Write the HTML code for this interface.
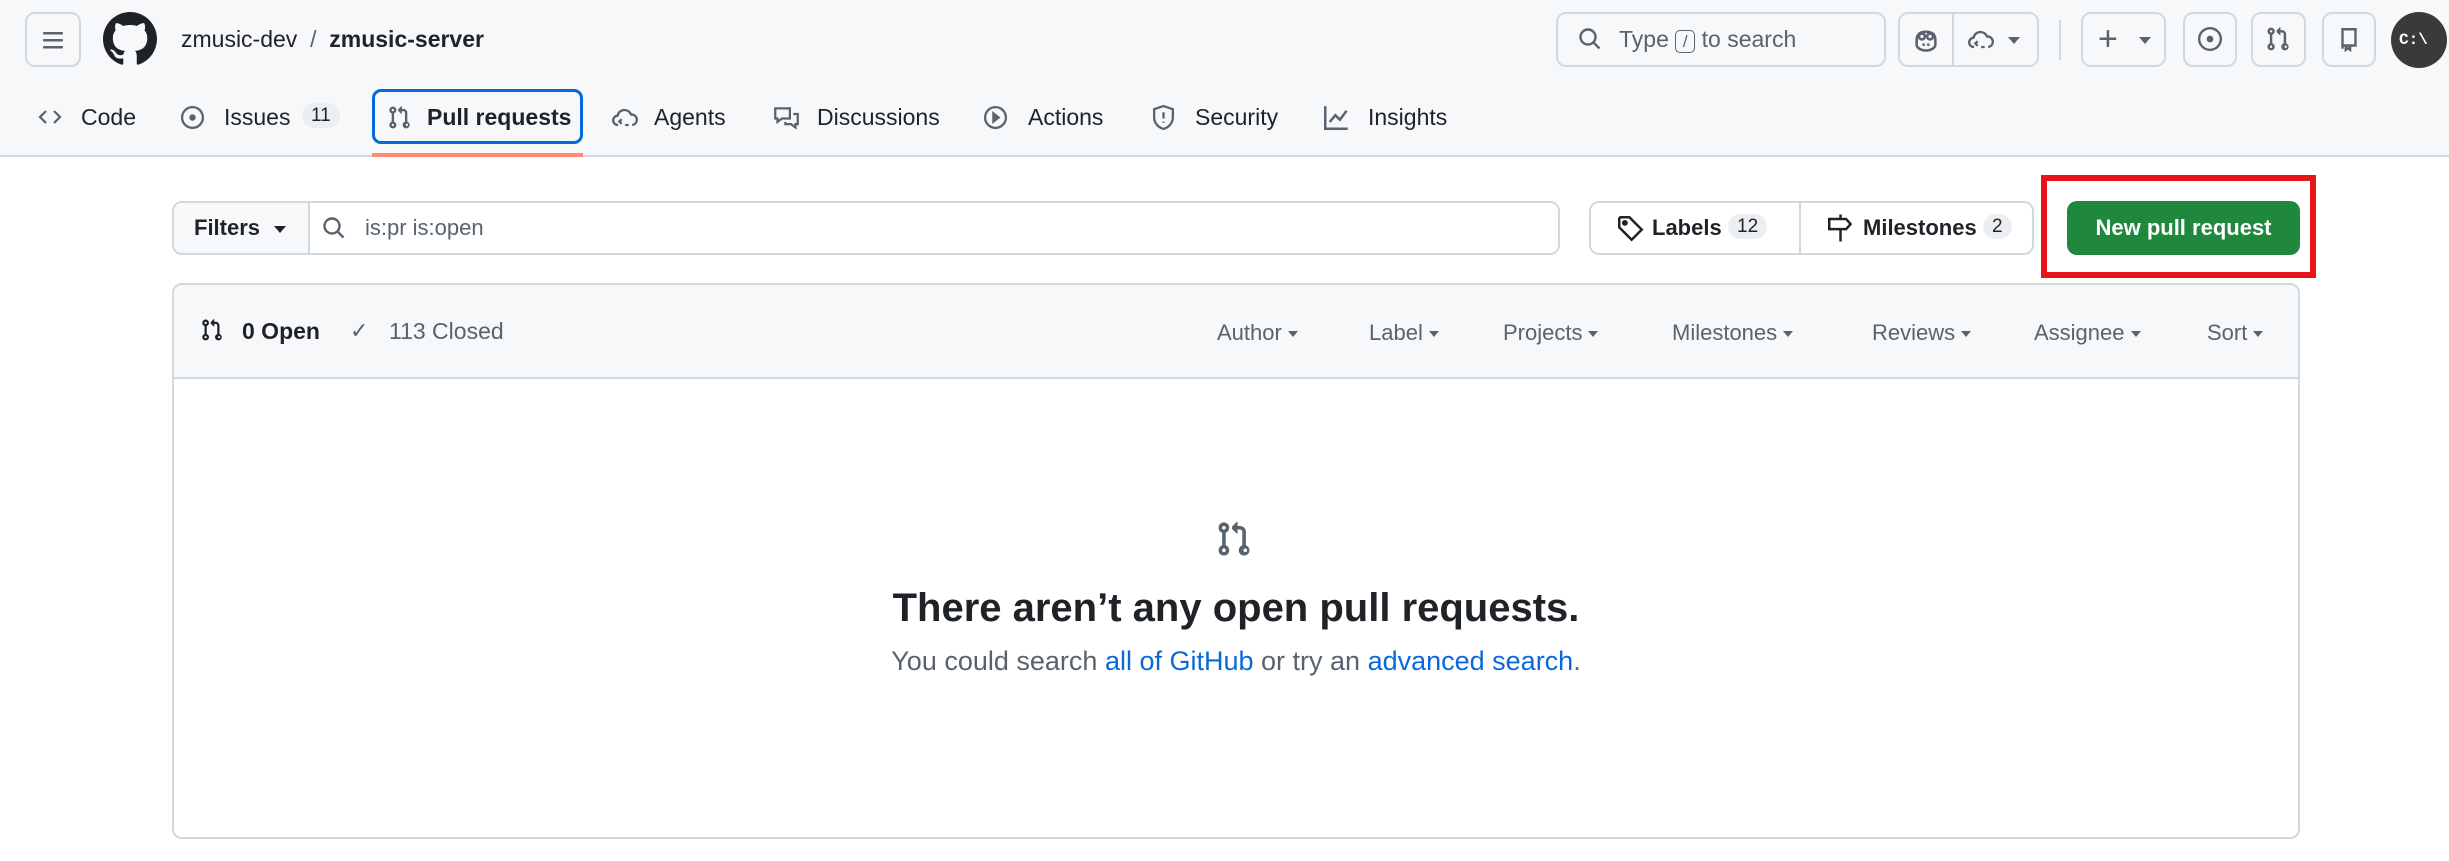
<!DOCTYPE html>
<html><head><meta charset="utf-8"><style>
*{box-sizing:border-box;margin:0;padding:0}
body{width:2449px;height:861px;background:#fff;font-family:"Liberation Sans",sans-serif;color:#1f2328;position:relative;overflow:hidden}
.hdr{position:absolute;left:0;top:0;width:2449px;height:157px;background:#f6f8fa;border-bottom:2px solid #d1d9e0}
.a{position:absolute}
.btn{position:absolute;border:2px solid #d1d9e0;border-radius:10px;background:#f6f8fa}
.t{position:absolute;white-space:nowrap;font-size:22px;line-height:1}
svg{position:absolute}
.cnt{background:#eceff2;border-radius:20px;padding:3px 9px;font-size:19px;color:#1f2328}
.dd{color:#59636e;font-size:22px;position:absolute;top:320px}
.dd:after{content:"";display:inline-block;margin-left:6px;vertical-align:3px;border-left:5px solid transparent;border-right:5px solid transparent;border-top:6px solid #59636e}
</style></head><body>
<div class="hdr"></div>
<div class="btn" style="left:25px;top:12px;width:56px;height:55px"></div>
<svg style="left:41px;top:28px" width="24" height="24" viewBox="0 0 24 24" fill="#59636e"><rect x="2" y="4" width="20" height="2.5" rx="1"/><rect x="2" y="11" width="20" height="2.5" rx="1"/><rect x="2" y="18" width="20" height="2.5" rx="1"/></svg>
<svg style="left:103px;top:12px" width="54" height="54" viewBox="0 0 16 16" fill="#1f2328"><path d="M8 0C3.58 0 0 3.58 0 8c0 3.54 2.29 6.53 5.470 7.59.4.07.55-.17.55-.38 0-.19-.01-.82-.01-1.49-2.01.37-2.530-.49-2.69-.94-.09-.23-.48-.94-.82-1.13-.28-.15-.68-.52-.01-.53.63-.01 1.08.58 1.23.82.72 1.21 1.87.87 2.33.66.07-.52.28-.87.51-1.07-1.78-.2-3.64-.89-3.64-3.95 0-.87.31-1.59.82-2.15-.08-.2-.36-1.02.08-2.12 0 0 .67-.21 2.2.82.64-.18 1.32-.27 2-.27.68 0 1.36.09 2 .27 1.53-1.04 2.2-.82 2.2-.82.44 1.1.16 1.92.08 2.12.51.56.82 1.27.82 2.15 0 3.07-1.87 3.75-3.65 3.950.29.25.54.73.54 1.48 0 1.07-.01 1.93-.01 2.2 0 .21.15.46.55.38A8.013 8.013 0 0016 8c0-4.42-3.58-8-8-8z"/></svg>
<div class="t" style="left:181px;top:28px;font-size:23px">zmusic-dev &nbsp;<span style="color:#59636e">/</span>&nbsp; <b style="font-weight:600">zmusic-server</b></div>

<div class="btn" style="left:1556px;top:12px;width:330px;height:55px"></div>
<svg style="left:1578px;top:27px" width="24" height="24" viewBox="0 0 24 24" fill="none" stroke="#59636e" stroke-width="2.4"><circle cx="10" cy="10" r="7.5"/><path d="M15.5 15.5l6 6"/></svg>
<div class="t" style="left:1619px;top:28px;color:#59636e;font-size:23px">Type <span style="display:inline-block;border:1.5px solid #59636e;border-radius:5px;width:20px;text-align:center;font-size:17px;padding:2px 0">/</span> to search</div>
<div class="btn" style="left:1898px;top:12px;width:141px;height:55px"></div>
<div class="a" style="left:1952px;top:12px;width:2px;height:55px;background:#d1d9e0"></div>
<svg style="left:1912px;top:26px" width="28" height="28" viewBox="0 0 24 24" fill="none" stroke="#59636e" stroke-width="2.2"><path d="M4 12c0-4 2-7 8-7s8 3 8 7v4c0 3-4 5-8 5s-8-2-8-5z"/><circle cx="8.5" cy="9" r="2.5"/><circle cx="15.5" cy="9" r="2.5"/><path d="M10 15v2M14 15v2"/></svg>
<svg style="left:1966px;top:26px" width="28" height="28" viewBox="0 0 24 24" fill="none" stroke="#59636e" stroke-width="2"><path d="M7 18a4 4 0 01-.5-8A6 6 0 0118 9a4.5 4.5 0 011 9"/><path d="M10 13l-2 2 2 2M13 18h3"/></svg>
<div class="a" style="left:2008px;top:37px;border-left:6px solid transparent;border-right:6px solid transparent;border-top:7px solid #59636e"></div>
<div class="a" style="left:2059px;top:20px;width:2px;height:40px;background:#d1d9e0"></div>
<div class="btn" style="left:2081px;top:12px;width:85px;height:55px"></div>
<div class="t" style="left:2098px;top:22px;font-size:34px;color:#59636e;font-weight:300">+</div>
<div class="a" style="left:2139px;top:37px;border-left:6px solid transparent;border-right:6px solid transparent;border-top:7px solid #59636e"></div>
<div class="btn" style="left:2183px;top:12px;width:54px;height:55px"></div>
<svg style="left:2197px;top:26px" width="26" height="26" viewBox="0 0 24 24" fill="none" stroke="#59636e" stroke-width="2.2"><circle cx="12" cy="12" r="10"/><circle cx="12" cy="12" r="2" fill="#59636e"/></svg>
<div class="btn" style="left:2251px;top:12px;width:55px;height:55px"></div>
<svg style="left:2265px;top:26px" width="26" height="26" viewBox="0 0 16 16" fill="#59636e"><path d="M1.5 3.25a2.25 2.25 0 113 2.12v5.26a2.25 2.25 0 11-1.5 0V5.37A2.25 2.25 0 011.5 3.25zm5.68-.53L9.03.87a.25.25 0 01.47.18V2.5h1A2.5 2.5 0 0113 5v5.63a2.25 2.25 0 11-1.5 0V5a1 1 0 00-1-1h-1v1.44a.25.25 0 01-.43.18L7.18 3.78a.25.25 0 010-.35zM3.75 2.5a.75.75 0 100 1.5.75.75 0 000-1.5zm0 9.5a.75.75 0 100 1.5.75.75 0 000-1.5zm8.25.75a.75.75 0 101.5 0 .75.75 0 00-1.5 0z"/></svg>
<div class="btn" style="left:2322px;top:12px;width:54px;height:55px"></div>
<svg style="left:2336px;top:26px" width="26" height="26" viewBox="0 0 24 24" fill="none" stroke="#59636e" stroke-width="2.2"><path d="M6 3h12v15H6zM6 18v3M9 18v4l2-1.5 2 1.5v-4"/></svg>
<div class="a" style="left:2391px;top:12px;width:56px;height:56px;border-radius:50%;background:#3a3a3a;color:#fff;font-family:'Liberation Mono',monospace;font-weight:bold;font-size:16px;line-height:56px;padding-left:8px">C:\</div>

<svg style="left:38px;top:105px" width="24" height="24" viewBox="0 0 24 24" fill="none" stroke="#59636e" stroke-width="2.2"><path d="M8 6l-6 6 6 6M16 6l6 6-6 6"/></svg>
<div class="t" style="left:81px;top:106px;font-size:23px">Code</div>
<svg style="left:180px;top:105px" width="25" height="25" viewBox="0 0 24 24" fill="none" stroke="#59636e" stroke-width="2.2"><circle cx="12" cy="12" r="10"/><circle cx="12" cy="12" r="2" fill="#59636e"/></svg>
<div class="t" style="left:224px;top:106px;font-size:23px">Issues</div>
<div class="t cnt" style="left:302px;top:103px">11</div>
<div class="a" style="left:372px;top:89px;width:211px;height:55px;border:3px solid #0969da;border-radius:9px"></div>
<div class="a" style="left:372px;top:153px;width:211px;height:4px;background:#fd8c73"></div>
<svg style="left:387px;top:105px" width="25" height="25" viewBox="0 0 16 16" fill="#59636e"><path d="M1.5 3.25a2.25 2.25 0 113 2.12v5.26a2.25 2.25 0 11-1.5 0V5.37A2.25 2.25 0 011.5 3.25zm5.68-.53L9.03.87a.25.25 0 01.47.18V2.5h1A2.5 2.5 0 0113 5v5.63a2.25 2.25 0 11-1.5 0V5a1 1 0 00-1-1h-1v1.44a.25.25 0 01-.43.18L7.18 3.78a.25.25 0 010-.35zM3.75 2.5a.75.75 0 100 1.5.75.75 0 000-1.5zm0 9.5a.75.75 0 100 1.5.75.75 0 000-1.5zm8.25.75a.75.75 0 101.5 0 .75.75 0 00-1.5 0z"/></svg>
<div class="t" style="left:427px;top:106px;font-size:23px;font-weight:bold">Pull requests</div>
<svg style="left:610px;top:104px" width="28" height="28" viewBox="0 0 24 24" fill="none" stroke="#59636e" stroke-width="2"><path d="M7 18a4 4 0 01-.5-8A6 6 0 0118 9a4.5 4.5 0 011 9"/><path d="M10 13l-2 2 2 2M13 18h3"/></svg>
<div class="t" style="left:654px;top:106px;font-size:23px">Agents</div>
<svg style="left:773px;top:105px" width="27" height="27" viewBox="0 0 24 24" fill="none" stroke="#59636e" stroke-width="2"><path d="M2 3h13v9H8l-4 3v-3H2zM18 8h4v9h-2v3l-4-3h-5v-2"/></svg>
<div class="t" style="left:817px;top:106px;font-size:23px">Discussions</div>
<svg style="left:983px;top:105px" width="25" height="25" viewBox="0 0 24 24" fill="none" stroke="#59636e" stroke-width="2.2"><circle cx="12" cy="12" r="10"/><path d="M10 8l5 4-5 4z" fill="#59636e"/></svg>
<div class="t" style="left:1028px;top:106px;font-size:23px">Actions</div>
<svg style="left:1151px;top:104px" width="25" height="27" viewBox="0 0 24 26" fill="none" stroke="#59636e" stroke-width="2.2"><path d="M12 2l9 3v8c0 6-5 10-9 11-4-1-9-5-9-11V5z"/><path d="M12 8v6M12 17v1"/></svg>
<div class="t" style="left:1195px;top:106px;font-size:23px">Security</div>
<svg style="left:1323px;top:104px" width="27" height="27" viewBox="0 0 24 24" fill="none" stroke="#59636e" stroke-width="2.2"><path d="M2 2v20h20M6 16l5-6 4 4 6-8"/></svg>
<div class="t" style="left:1368px;top:106px;font-size:23px">Insights</div>

<div class="a" style="left:172px;top:201px;width:1388px;height:54px;border:2px solid #d1d9e0;border-radius:10px;background:#fff;overflow:hidden">
<div style="position:absolute;left:0;top:0;width:136px;height:52px;background:#f6f8fa;border-right:2px solid #d1d9e0"></div></div>
<div class="t" style="left:194px;top:217px;font-weight:bold">Filters</div>
<div class="a" style="left:274px;top:226px;border-left:6px solid transparent;border-right:6px solid transparent;border-top:7px solid #1f2328"></div>
<svg style="left:322px;top:216px" width="24" height="24" viewBox="0 0 24 24" fill="none" stroke="#59636e" stroke-width="2.4"><circle cx="10" cy="10" r="7.5"/><path d="M15.5 15.5l6 6"/></svg>
<div class="t" style="left:365px;top:217px;color:#59636e">is:pr is:open</div>

<div class="a" style="left:1589px;top:201px;width:445px;height:54px;border:2px solid #d1d9e0;border-radius:10px;background:#fff"></div>
<div class="a" style="left:1799px;top:201px;width:2px;height:54px;background:#d1d9e0"></div>
<svg style="left:1617px;top:215px" width="27" height="27" viewBox="0 0 24 24" fill="none" stroke="#1f2328" stroke-width="2.2"><path d="M2 3v8l11 11 9-9L11 2H3z"/><circle cx="7" cy="7" r="1.5" fill="#1f2328"/></svg>
<div class="t" style="left:1652px;top:217px;font-weight:bold">Labels</div>
<div class="t cnt" style="left:1728px;top:214px">12</div>
<svg style="left:1827px;top:213px" width="27" height="30" viewBox="0 0 24 26" fill="none" stroke="#1f2328" stroke-width="2.2"><path d="M12 1v4M12 14v11M2 5h15l4 4.5-4 4.5H2z"/></svg>
<div class="t" style="left:1863px;top:217px;font-weight:bold">Milestones</div>
<div class="t cnt" style="left:1983px;top:214px">2</div>

<div class="a" style="left:2067px;top:201px;width:233px;height:54px;background:#1f883d;border-radius:10px;color:#fff;font-weight:bold;font-size:22px;text-align:center;line-height:54px">New pull request</div>
<div class="a" style="left:2041px;top:175px;width:275px;height:103px;border:6px solid #e5151b"></div>

<div class="a" style="left:172px;top:283px;width:2128px;height:556px;border:2px solid #d1d9e0;border-radius:10px;overflow:hidden">
<div style="height:94px;background:#f6f8fa;border-bottom:2px solid #d1d9e0"></div></div>
<svg style="left:200px;top:318px" width="24" height="24" viewBox="0 0 16 16" fill="#1f2328"><path d="M1.5 3.25a2.25 2.25 0 113 2.12v5.26a2.25 2.25 0 11-1.5 0V5.37A2.25 2.25 0 011.5 3.25zm5.68-.53L9.03.87a.25.25 0 01.47.18V2.5h1A2.5 2.5 0 0113 5v5.63a2.25 2.25 0 11-1.5 0V5a1 1 0 00-1-1h-1v1.44a.25.25 0 01-.43.18L7.18 3.78a.25.25 0 010-.35zM3.75 2.5a.75.75 0 100 1.5.75.75 0 000-1.5zm0 9.5a.75.75 0 100 1.5.75.75 0 000-1.5zm8.25.75a.75.75 0 101.5 0 .75.75 0 00-1.5 0z"/></svg>
<div class="t" style="left:242px;top:320px;font-weight:bold;font-size:23px">0 Open</div>
<div class="t" style="left:350px;top:320px;color:#59636e">✓</div>
<div class="t" style="left:389px;top:320px;color:#59636e;font-size:23px">113 Closed</div>
<div class="dd" style="left:1217px">Author</div>
<div class="dd" style="left:1369px">Label</div>
<div class="dd" style="left:1503px">Projects</div>
<div class="dd" style="left:1672px">Milestones</div>
<div class="dd" style="left:1872px">Reviews</div>
<div class="dd" style="left:2034px">Assignee</div>
<div class="dd" style="left:2207px">Sort</div>

<svg style="left:1215px;top:520px" width="38" height="38" viewBox="0 0 16 16" fill="#59636e"><path d="M1.5 3.25a2.25 2.25 0 113 2.12v5.26a2.25 2.25 0 11-1.5 0V5.37A2.25 2.25 0 011.5 3.25zm5.68-.53L9.03.87a.25.25 0 01.47.18V2.5h1A2.5 2.5 0 0113 5v5.63a2.25 2.25 0 11-1.5 0V5a1 1 0 00-1-1h-1v1.44a.25.25 0 01-.43.18L7.18 3.78a.25.25 0 010-.35zM3.75 2.5a.75.75 0 100 1.5.75.75 0 000-1.5zm0 9.5a.75.75 0 100 1.5.75.75 0 000-1.5zm8.25.75a.75.75 0 101.5 0 .75.75 0 00-1.5 0z"/></svg>
<div class="t" style="left:0;width:2472px;text-align:center;top:588px;font-size:40px;font-weight:bold">There aren’t any open pull requests.</div>
<div class="t" style="left:0;width:2472px;text-align:center;top:648px;font-size:27px;color:#59636e">You could search <span style="color:#0969da">all of GitHub</span> or try an <span style="color:#0969da">advanced search</span>.</div>
</body></html>
